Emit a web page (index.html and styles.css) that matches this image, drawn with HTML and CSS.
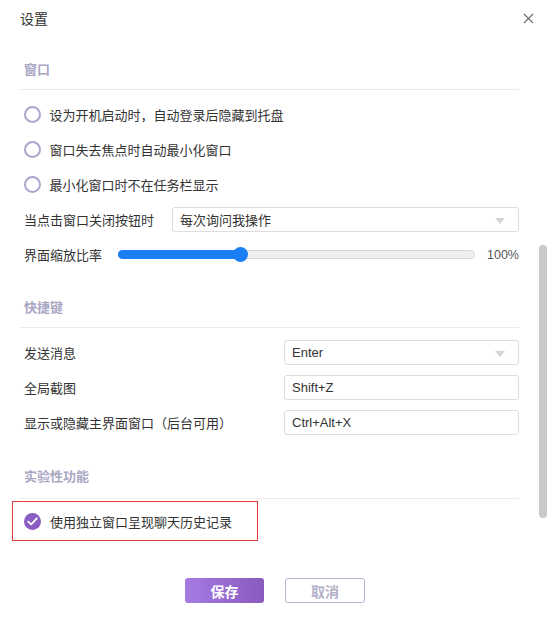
FILE: index.html
```html
<!DOCTYPE html>
<html lang="zh-CN">
<head>
<meta charset="utf-8">
<title>设置</title>
<link rel="stylesheet" href="styles.css">
</head>
<body>
<div class="dialog">
  <div class="header">
    <span class="title">设置</span>
    <svg class="close" width="11" height="11" viewBox="0 0 11 11"><path d="M1 1L10 10M10 1L1 10" stroke="#6b6b6b" stroke-width="1.1" fill="none"/></svg>
  </div>
  <div class="content">
    <div class="section first">
      <div class="sec-title">窗口</div>
      <div class="rows">
        <div class="row"><span class="radio"></span><span>设为开机启动时，自动登录后隐藏到托盘</span></div>
        <div class="row"><span class="radio"></span><span>窗口失去焦点时自动最小化窗口</span></div>
        <div class="row"><span class="radio"></span><span>最小化窗口时不在任务栏显示</span></div>
        <div class="row">
          <span class="label-close">当点击窗口关闭按钮时</span>
          <div class="select wide"><span>每次询问我操作</span><span class="arrow"></span></div>
        </div>
        <div class="row">
          <span class="label-zoom">界面缩放比率</span>
          <div class="slider"><div class="fill"></div><div class="thumb"></div></div>
          <span class="pct">100%</span>
        </div>
      </div>
    </div>
    <div class="section">
      <div class="sec-title">快捷键</div>
      <div class="rows">
        <div class="row"><span class="grow">发送消息</span><div class="select key"><span>Enter</span><span class="arrow"></span></div></div>
        <div class="row"><span class="grow">全局截图</span><div class="select key"><span>Shift+Z</span></div></div>
        <div class="row"><span class="grow">显示或隐藏主界面窗口（后台可用）</span><div class="select key"><span>Ctrl+Alt+X</span></div></div>
      </div>
    </div>
    <div class="section third">
      <div class="sec-title">实验性功能</div>
      <div class="exp">
        <span class="check"><svg width="11" height="9" viewBox="0 0 11 9"><path d="M1.2 4.6L4.2 7.4L9.8 1.4" stroke="#fff" stroke-width="1.8" fill="none" stroke-linecap="round" stroke-linejoin="round"/></svg></span>
        <span>使用独立窗口呈现聊天历史记录</span>
      </div>
    </div>
  </div>
  <div class="footer">
    <button class="btn save">保存</button>
    <button class="btn cancel">取消</button>
  </div>
  <div class="scrollbar"></div>
</div>
</body>
</html>
```
FILE: styles.css
```css
* { box-sizing: border-box; }
html, body { margin: 0; padding: 0; background: #fff; }
body {
  font-family: "Liberation Sans", "Noto Sans CJK SC", sans-serif;
  font-size: 13px;
  color: #333;
  width: 549px;
  height: 621px;
  overflow: hidden;
}
.dialog { position: relative; width: 549px; height: 621px; }
.header {
  height: 36px;
  display: flex;
  align-items: center;
  justify-content: space-between;
  padding: 0 15px 0 20px;
}
.title { font-size: 14px; color: #333; }
.close { display: block; }
.content { margin: 0 30px 0 19px; }
.section { margin-top: 26px; }
.section.first { margin-top: 24px; }
.section.third { margin-top: 27px; }
.sec-title {
  height: 30px;
  line-height: 20px;
  padding-left: 5px;
  font-weight: bold;
  color: #aaa7c4;
  border-bottom: 1px solid #ececec;
}
.third .sec-title { height: 32px; }
.rows { padding-top: 7px; }
.row {
  height: 35px;
  display: flex;
  align-items: center;
  padding-left: 5px;
}
.radio {
  width: 17px;
  height: 17px;
  border: 2px solid #aaa6cc;
  border-radius: 50%;
  margin-left: -0.5px;
  margin-right: 9px;
  flex: none;
}
.label-close { width: 148px; flex: none; }
.select {
  height: 25px;
  border: 1px solid #dedede;
  border-radius: 3px;
  display: flex;
  align-items: center;
  justify-content: space-between;
  padding: 0 13px 0 7px;
}
.select.wide { flex: 1; }
.select.key { width: 235px; flex: none; }
.grow { flex: 1; }
.arrow {
  width: 0; height: 0;
  border-left: 5px solid transparent;
  border-right: 5px solid transparent;
  border-top: 6px solid #d4d4d4;
  margin-top: 2px;
}
.label-zoom { width: 94px; flex: none; }
.slider {
  position: relative;
  width: 357px;
  height: 9px;
  border: 1px solid #d6d6d6;
  border-radius: 5px;
  background: #efefef;
  flex: none;
}
.fill {
  position: absolute;
  left: -1px; top: -1px; bottom: -1px;
  width: 122px;
  background: #1a7ef4;
  border-radius: 5px 0 0 5px;
}
.thumb {
  position: absolute;
  left: 114px; top: -4px;
  width: 15px; height: 15px;
  border-radius: 50%;
  background: #1a7ef4;
}
.pct {
  margin-left: auto;
  color: #555;
  font-size: 12.5px;
}
.exp {
  margin: 2px 0 0 -7px;
  width: 246px;
  height: 40px;
  border: 1px solid #e5393c;
  display: flex;
  align-items: center;
  padding-left: 11px;
}
.check {
  width: 17px; height: 17px;
  border-radius: 50%;
  background: #8a5cc3;
  display: flex;
  align-items: center;
  justify-content: center;
  margin-right: 9px;
  flex: none;
}
.check svg { display: block; }
.footer {
  margin-top: 37px;
  display: flex;
  justify-content: center;
  gap: 21px;
  padding-left: 1px;
}
.btn {
  width: 80px;
  height: 25px;
  border-radius: 3px;
  font-family: "Liberation Sans", "Noto Sans CJK SC", sans-serif;
  font-size: 14px;
  font-weight: bold;
  padding: 0;
}
.save {
  width: 79px;
  border: none;
  color: #fff;
  background: linear-gradient(90deg, #a57be3, #8a5bbe);
}
.cancel {
  border: 1px solid #b9b5d2;
  background: #fff;
  color: #b3b0c9;
}
.scrollbar {
  position: absolute;
  left: 539px;
  top: 245px;
  width: 8px;
  height: 273px;
  border-radius: 4px;
  background: #c9c9c9;
}
```
